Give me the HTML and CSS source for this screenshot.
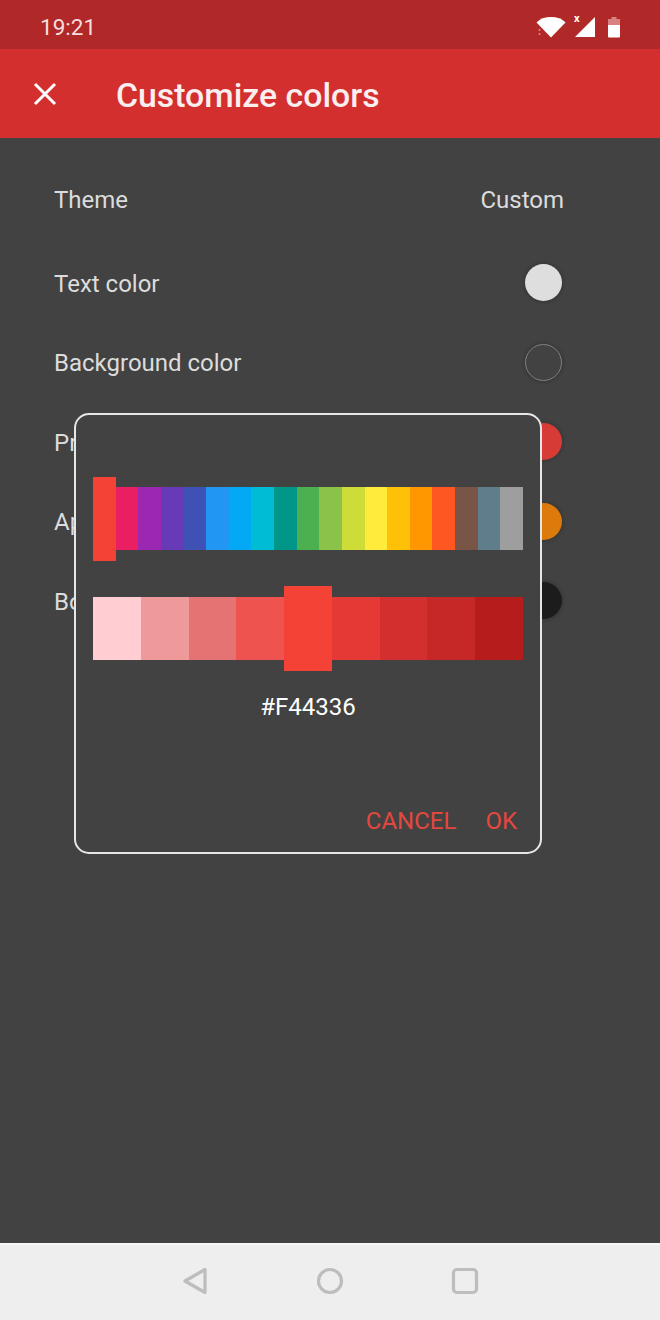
FILE: index.html
```html
<!DOCTYPE html>
<html lang="en">
<head>
<meta charset="utf-8">
<title>Customize colors</title>
<link rel="stylesheet" href="styles.css">
</head>
<body>
<div class="phone">
  <div class="status">
    <span class="time">19:21</span>
    <div class="status-icons">
      <svg class="wifi" width="30" height="22" viewBox="0 0 30 22"><path fill="#fff" d="M0.500 6.500C4 2.800 9 1 15 1S26 2.800 29.500 6.500L15 21.500Z"/><circle cx="3.500" cy="14" r="1" fill="#e58a8a"/><circle cx="3.500" cy="18" r="1" fill="#e58a8a"/></svg>
      <div class="signal">
        <span class="x">x</span>
        <svg width="22" height="22" viewBox="0 0 22 22"><path fill="#fff" d="M21 1V21H1Z"/></svg>
      </div>
      <svg class="battery" width="14" height="22" viewBox="0 0 14 22"><path fill="#d98080" d="M4.500 1h5v2h3.500v6H1V3h3.500Z"/><path fill="#fff" d="M1 9h12v11.500q0 1-1 1H2q-1 0-1-1Z"/></svg>
    </div>
  </div>
  <header class="appbar">
    <svg class="close" width="24" height="24" viewBox="0 0 24 24"><path d="M2 2 22 22M22 2 2 22" stroke="#fff" stroke-width="3" fill="none"/></svg>
    <h1 class="title">Customize colors</h1>
  </header>
  <main class="content">
    <div class="row row-theme"><span>Theme</span><span>Custom</span></div>
    <div class="row"><span>Text color</span><i class="dot dot-text"></i></div>
    <div class="row"><span>Background color</span><i class="dot dot-bg"></i></div>
    <div class="row"><span>Primary color</span><i class="dot dot-primary"></i></div>
    <div class="row"><span>App icon color</span><i class="dot dot-accent"></i></div>
    <div class="row"><span>Border color</span><i class="dot dot-border"></i></div>

    <div class="dialog">
      <div class="hues">
        <i class="hue sel s-f44336"></i><i class="hue s-e91e63"></i><i class="hue s-9c27b0"></i><i class="hue s-673ab7"></i><i class="hue s-3f51b5"></i><i class="hue s-2196f3"></i><i class="hue s-03a9f4"></i><i class="hue s-00bcd4"></i><i class="hue s-009688"></i><i class="hue s-4caf50"></i><i class="hue s-8bc34a"></i><i class="hue s-cddc39"></i><i class="hue s-ffeb3b"></i><i class="hue s-ffc107"></i><i class="hue s-ff9800"></i><i class="hue s-ff5722"></i><i class="hue s-795548"></i><i class="hue s-607d8b"></i><i class="hue s-9e9e9e"></i>
      </div>
      <div class="shades">
        <i class="shade s-ffcdd2"></i><i class="shade s-ef9a9a"></i><i class="shade s-e57373"></i><i class="shade s-ef5350"></i><i class="shade sel s-f44336"></i><i class="shade s-e53935"></i><i class="shade s-d32f2f"></i><i class="shade s-c62828"></i><i class="shade s-b71c1c"></i>
      </div>
      <div class="hex">#F44336</div>
      <div class="actions"><span>CANCEL</span><span>OK</span></div>
    </div>
  </main>
  <nav class="navbar">
    <svg width="28" height="30" viewBox="0 0 28 30"><path d="M24 3.500V26.500L4 15Z" fill="none" stroke="#bdbdbd" stroke-width="3.200" stroke-linejoin="round"/></svg>
    <svg width="28" height="30" viewBox="0 0 28 30"><circle cx="14" cy="15" r="11.500" fill="none" stroke="#bdbdbd" stroke-width="3.200"/></svg>
    <svg width="28" height="30" viewBox="0 0 28 30"><rect x="2.500" y="3.500" width="23" height="23" rx="3.500" fill="none" stroke="#bdbdbd" stroke-width="3.200"/></svg>
  </nav>
</div>
</body>
</html>
```
FILE: styles.css
```css
* { box-sizing: border-box; }
html, body { margin: 0; padding: 0; }
body { font-family: Roboto, "Liberation Sans", sans-serif; background: #424242; }
.phone { width: 660px; height: 1320px; display: flex; flex-direction: column; overflow: hidden; }

.status { height: 49px; flex: none; background: #b12828; display: flex; align-items: center; justify-content: space-between; padding: 9px 39px 4px 40px; color: #f5dede; }
.time { font-size: 22.500px; }
.status-icons { display: flex; align-items: center; gap: 8px; }
.status-icons svg { display: block; }
.signal { position: relative; width: 22px; height: 22px; }
.x { position: absolute; left: 0; top: -4px; font-size: 11px; font-weight: 700; line-height: 14px; color: #fff; }
.battery { margin-left: 3px; }

.appbar { height: 89px; flex: none; background: #d32f2f; display: flex; align-items: center; padding: 0 0 0 33px; }
.close { display: block; }
.title { margin: 3px 0 0 59px; font-size: 33.800px; font-weight: 500; color: #fbeeee; }

.content { position: relative; flex: 1; background: #424242; padding: 21px 97px 0 54px; color: #dcdcdc; }
.row { height: 79.500px; display: flex; align-items: center; justify-content: space-between; font-size: 24px; }
.row span { padding-top: 2px; }
.row-theme { height: 79px; margin-right: -1px; margin-bottom: 4.750px; }
.dot { width: 37px; height: 37px; border-radius: 50%; flex: none; margin-right: 1px; box-shadow: 0 0 3px 2px rgba(0, 0, 0, 0.12); }
.dot-text { background: #dedede; }
.dot-bg { background: #424242; border: 1.500px solid #808080; }
.dot-primary { background: #d63b35; }
.dot-accent { background: #dc7a0c; }
.dot-border { background: #1c1c1c; }

.dialog { position: absolute; left: 74px; top: 275px; width: 468px; height: 441px; background: #424242; border: 2px solid #e6e6e6; border-radius: 15px; padding: 62px 17px 0 17px; display: flex; flex-direction: column; }
.hues, .shades { display: flex; align-items: center; width: 430px; flex: none; }
.hues { height: 84px; }
.shades { height: 85px; margin-top: 25px; }
.hue { flex: 1; height: 63px; margin-bottom: 1px; }
.shade { flex: 1; height: 63px; }
.sel { height: 100%; margin-bottom: 0; }
.hex { margin-top: 21px; text-align: center; color: #fff; font-size: 24px; line-height: 30px; }
.actions { margin-top: auto; margin-bottom: 15px; display: flex; justify-content: flex-end; gap: 29px; padding-right: 6px; color: #e2483f; font-size: 24px; line-height: 32px; }

.navbar { height: 77px; flex: none; background: #eeeeee; display: flex; align-items: center; justify-content: center; gap: 107px; border-top: 2px solid #f6f6f6; padding-bottom: 3px; }

.s-f44336 { background: #f44336; } .s-e91e63 { background: #e91e63; } .s-9c27b0 { background: #9c27b0; }
.s-673ab7 { background: #673ab7; } .s-3f51b5 { background: #3f51b5; } .s-2196f3 { background: #2196f3; }
.s-03a9f4 { background: #03a9f4; } .s-00bcd4 { background: #00bcd4; } .s-009688 { background: #009688; }
.s-4caf50 { background: #4caf50; } .s-8bc34a { background: #8bc34a; } .s-cddc39 { background: #cddc39; }
.s-ffeb3b { background: #ffeb3b; } .s-ffc107 { background: #ffc107; } .s-ff9800 { background: #ff9800; }
.s-ff5722 { background: #ff5722; } .s-795548 { background: #795548; } .s-607d8b { background: #607d8b; }
.s-9e9e9e { background: #9e9e9e; } .s-ffcdd2 { background: #ffcdd2; } .s-ef9a9a { background: #ef9a9a; }
.s-e57373 { background: #e57373; } .s-ef5350 { background: #ef5350; } .s-e53935 { background: #e53935; }
.s-d32f2f { background: #d32f2f; } .s-c62828 { background: #c62828; } .s-b71c1c { background: #b71c1c; }
```
